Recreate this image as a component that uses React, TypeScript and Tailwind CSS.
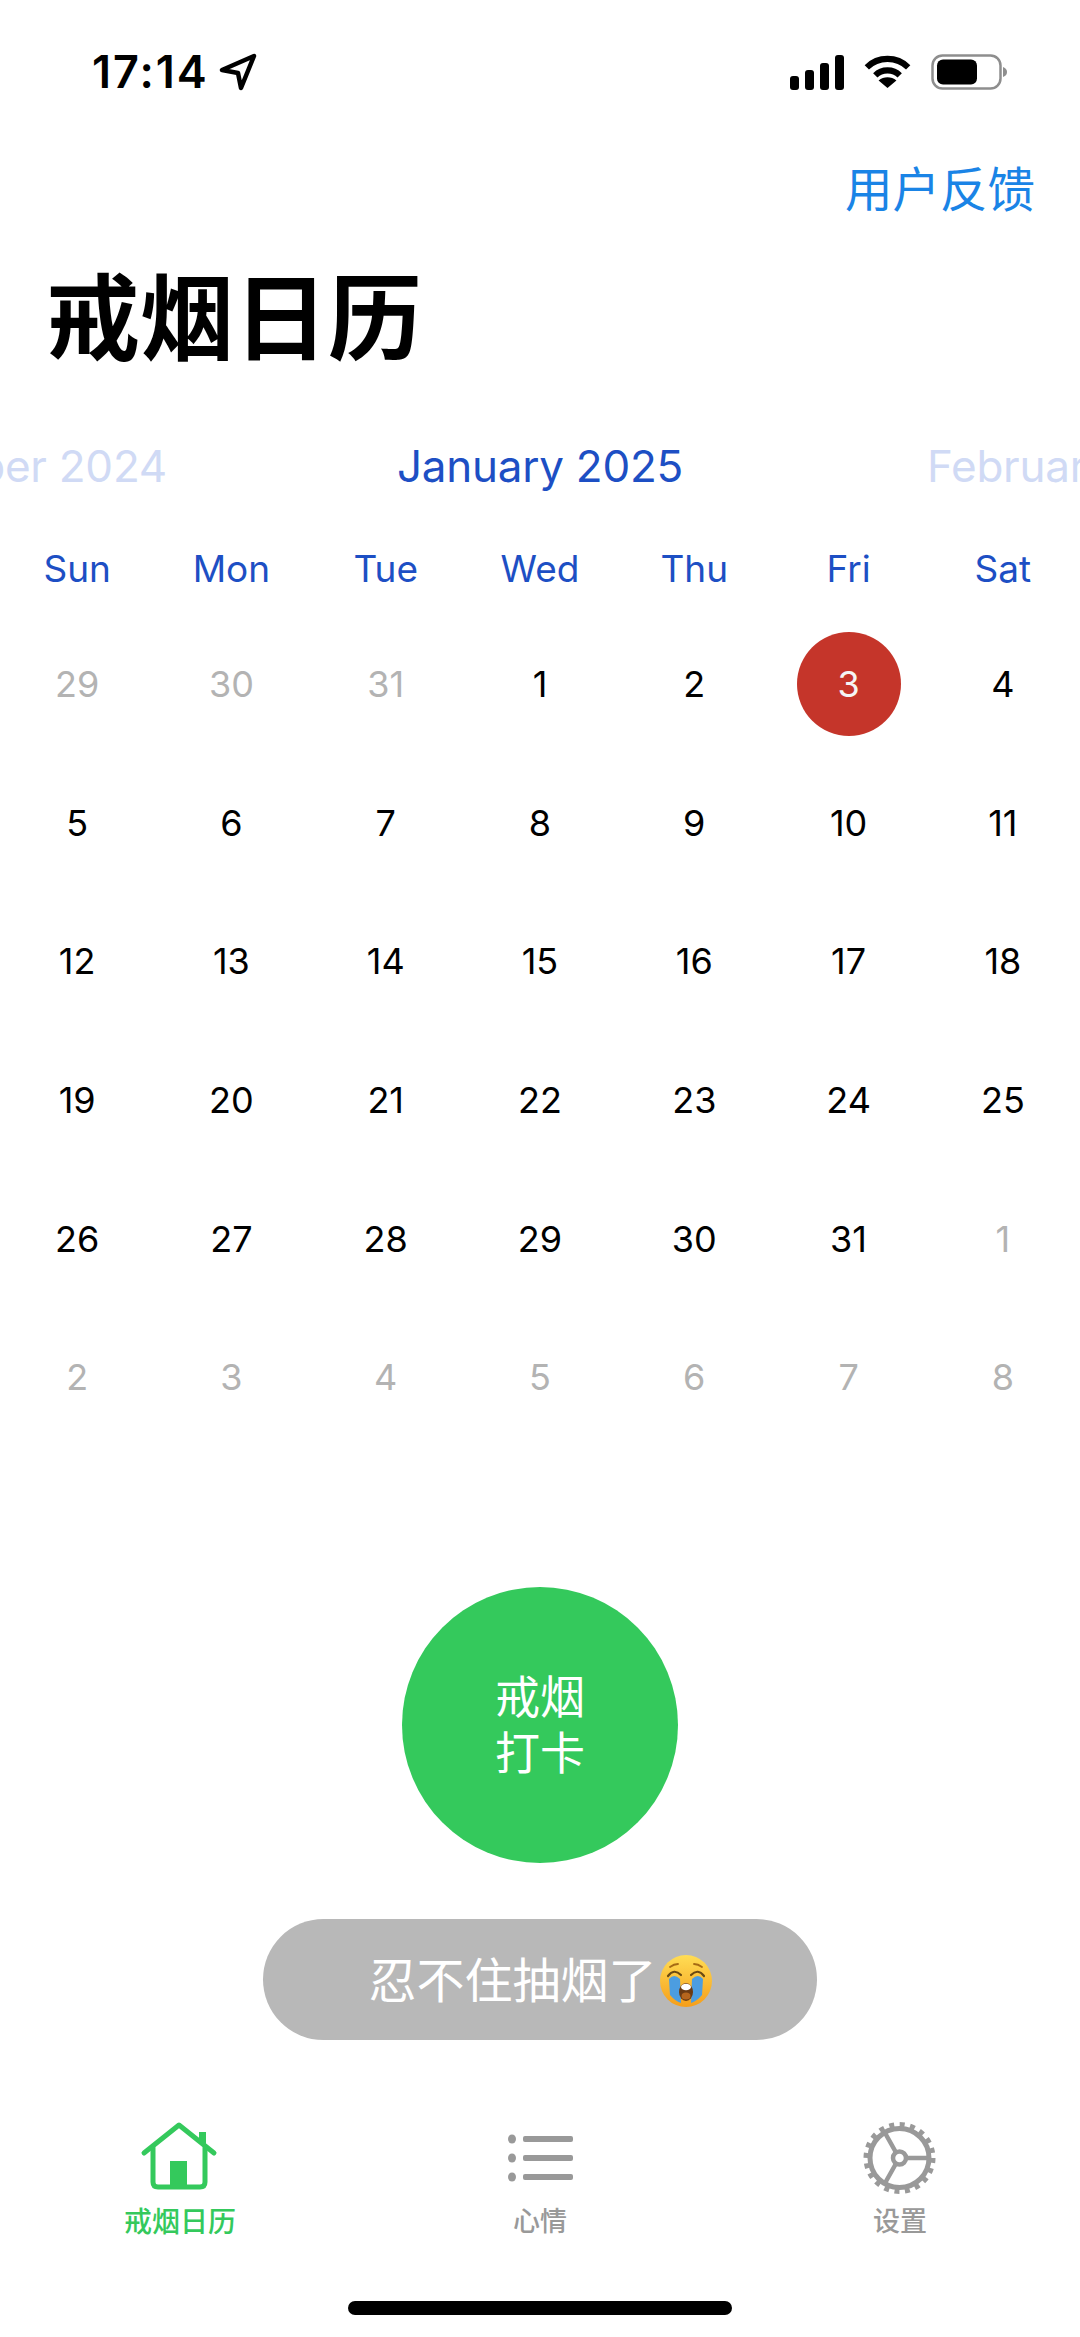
import React from 'react';

const weekDays = ['Sun', 'Mon', 'Tue', 'Wed', 'Thu', 'Fri', 'Sat'];

// 日历格子：muted 为上下月日期
const days = [
  ...[29, 30, 31].map((d) => ({ d, muted: true })),
  ...Array.from({ length: 31 }, (_, i) => ({ d: i + 1, muted: false })),
  ...Array.from({ length: 8 }, (_, i) => ({ d: i + 1, muted: true })),
];

function StatusIcons() {
  return (
    <div className="flex items-center">
      <svg width="54" height="35" viewBox="0 0 54 35" fill="#000">
        <rect x="0" y="21" width="9" height="14" rx="3" />
        <rect x="15" y="15" width="9" height="20" rx="3" />
        <rect x="30" y="8" width="9" height="27" rx="3" />
        <rect x="45" y="0" width="9" height="35" rx="3" />
      </svg>
      <svg width="47" height="34" viewBox="0 0 50 36" className="ml-[20px]">
        <path d="M3 13 C15 1 35 1 47 13" fill="none" stroke="#000" strokeWidth="6.5" />
        <path d="M12 21.5 C19 14.5 31 14.5 38 21.5" fill="none" stroke="#000" strokeWidth="6.5" />
        <path d="M25 35 L15.5 27 C21 22.5 29 22.5 34.5 27 Z" fill="#000" />
      </svg>
      <svg width="76" height="36" viewBox="0 0 76 36" className="ml-[20px]">
        <rect x="1.5" y="1.5" width="68" height="33" rx="10" fill="#fff" stroke="#8e8e8e" strokeWidth="2.5" />
        <rect x="6" y="5.5" width="40" height="25" rx="6" fill="#000" />
        <path d="M72 13 C75 14 76 16 76 18 C76 20 75 22 72 23 Z" fill="#8e8e8e" />
      </svg>
    </div>
  );
}

function HomeIcon() {
  return (
    <svg width="100" height="90" viewBox="0 0 100 90" fill="none" stroke="#34c95c" strokeWidth="5" strokeLinecap="round" strokeLinejoin="round">
      <path d="M14 43 L49 15 L84 43" />
      <path d="M23 38 V72 Q23 77 28 77 H70 Q75 77 75 72 V38" />
      <path d="M72.5 34 V22" strokeWidth="7" strokeLinecap="butt" />
      <rect x="40" y="51" width="17" height="26" fill="#34c95c" stroke="none" />
    </svg>
  );
}

function ListIcon() {
  return (
    <svg width="100" height="90" viewBox="0 0 100 90" fill="#999">
      <ellipse cx="22" cy="29" rx="4" ry="4.5" />
      <ellipse cx="22" cy="48" rx="4" ry="4.5" />
      <ellipse cx="22" cy="67" rx="4" ry="4.5" />
      <rect x="33" y="26" width="50" height="6" rx="2" />
      <rect x="33" y="45" width="50" height="6" rx="2" />
      <rect x="33" y="64" width="50" height="6" rx="2" />
    </svg>
  );
}

function GearIcon() {
  return (
    <svg width="100" height="90" viewBox="0 0 100 90" fill="none" stroke="#999">
      <circle cx="49.5" cy="48" r="29.5" strokeWidth="5" />
      <circle cx="49.5" cy="48" r="33.5" strokeWidth="5" strokeDasharray="5 5.52" />
      <circle cx="49.5" cy="48" r="6.5" strokeWidth="4.5" />
      <path d="M56 48 H79 M46 42.5 L34.5 22 M46 53.5 L34.5 74" strokeWidth="4.5" />
    </svg>
  );
}

function CryEmoji() {
  return (
    <svg width="52" height="52" viewBox="0 0 52 52" className="ml-[3px]">
      <defs>
        <linearGradient id="face" x1="0" y1="0" x2="0" y2="1">
          <stop offset="0" stopColor="#ffdd55" />
          <stop offset="1" stopColor="#f59e1a" />
        </linearGradient>
      </defs>
      <circle cx="26" cy="26" r="26" fill="url(#face)" />
      <path d="M9 24 Q14 18 20 24 L21 48 Q15 46 10 40 Z" fill="#4c9de0" />
      <path d="M32 24 Q38 18 43 24 L42 40 Q37 46 31 48 Z" fill="#4c9de0" />
      <path d="M8 21 Q14 13 21 20 M31 20 Q38 13 44 21" fill="none" stroke="#6b4a12" strokeWidth="2.2" strokeLinecap="round" />
      <path d="M10 12 Q14 9 18 9 M34 9 Q38 9 42 12" fill="none" stroke="#a66a14" strokeWidth="1.8" strokeLinecap="round" />
      <ellipse cx="26" cy="37" rx="7" ry="9" fill="#6b3a12" />
      <ellipse cx="26" cy="32" rx="5" ry="3.2" fill="#fff" />
      <ellipse cx="26" cy="41" rx="4.5" ry="3.5" fill="#b5651d" />
    </svg>
  );
}

export default function App() {
  return (
    <div className="w-[1080px] h-[2337px] bg-white overflow-hidden flex flex-col font-[Inter,'Noto_Sans_CJK_SC',sans-serif]">
      {/* 状态栏 */}
      <div className="h-[144px] flex items-center justify-between pl-[92px] pr-[73px]">
        <div className="flex items-center">
          <span className="text-[45px] leading-[54px] font-semibold text-black tracking-[2px]">17:14</span>
          <svg width="38" height="38" viewBox="0 0 38 38" fill="none" stroke="#000" strokeWidth="4.5" strokeLinejoin="round" className="ml-[10px]">
            <path d="M3 17 L35 3 L22 35 L19 20 Z" />
          </svg>
        </div>
        <StatusIcons />
      </div>

      <div className="mt-[16px] pr-[45px] text-right text-[47.5px] leading-[60px] text-[#1a84e6]">用户反馈</div>

      <h1 className="mt-[44px] pl-[46px] text-[94px] leading-[110px] font-bold text-black">戒烟日历</h1>

      {/* 月份切换 */}
      <div className="mt-[62px] h-[60px] grid grid-cols-[1fr_auto_1fr] overflow-hidden text-[44px] leading-[60px] whitespace-nowrap tracking-[-0.25px]">
        <div className="min-w-0 flex justify-end pr-[230px] text-[#d0daf5]">
          <span className="shrink-0">December 2024</span>
        </div>
        <div className="text-[#1d4fc4]">January 2025</div>
        <div className="min-w-0 pl-[244px] text-[#d0daf5]">February 2025</div>
      </div>

      <div className="mt-[48px] grid grid-cols-7 h-[50px]">
        {weekDays.map((w) => (
          <div key={w} className="text-center text-[37px] leading-[50px] text-[#1d4fc4]">{w}</div>
        ))}
      </div>

      <div className="mt-[21px] grid grid-cols-7 auto-rows-[138.6px]">
        {days.map((item, i) => (
          <div key={i} className="flex items-center justify-center">
            {item.d === 3 && !item.muted ? (
              <div className="w-[104px] h-[104px] rounded-full bg-[#c5352a] flex items-center justify-center text-[36px] text-[#f5f5f5]">3</div>
            ) : (
              <span className={`text-[36px] ${item.muted ? 'text-[#b3b3b3]' : 'text-black'}`}>{item.d}</span>
            )}
          </div>
        ))}
      </div>

      {/* 打卡按钮 */}
      <button className="mt-[140px] mx-auto w-[276px] h-[276px] rounded-full bg-[#34c95c] pt-[3px] text-white text-[45px] leading-[56px]">
        戒烟<br />打卡
      </button>

      <button className="mt-[56px] mx-auto w-[554px] h-[121px] rounded-full bg-[#b8b8b8] pt-[3px] text-white text-[48px] flex items-center justify-center">
        忍不住抽烟了
        <CryEmoji />
      </button>

      {/* 底部标签栏 */}
      <div className="mt-[70px] grid grid-cols-3">
        <div className="flex flex-col items-center">
          <HomeIcon />
          <span className="mt-[5px] text-[28px] leading-[34px] font-medium text-[#34c95c]">戒烟日历</span>
        </div>
        <div className="flex flex-col items-center">
          <ListIcon />
          <span className="mt-[5px] text-[27px] leading-[34px] font-medium text-[#999]">心情</span>
        </div>
        <div className="flex flex-col items-center">
          <GearIcon />
          <span className="mt-[5px] text-[27px] leading-[34px] font-medium text-[#999]">设置</span>
        </div>
      </div>

      <div className="mt-[62px] mx-auto w-[384px] h-[14px] rounded-full bg-black" />
    </div>
  );
}
